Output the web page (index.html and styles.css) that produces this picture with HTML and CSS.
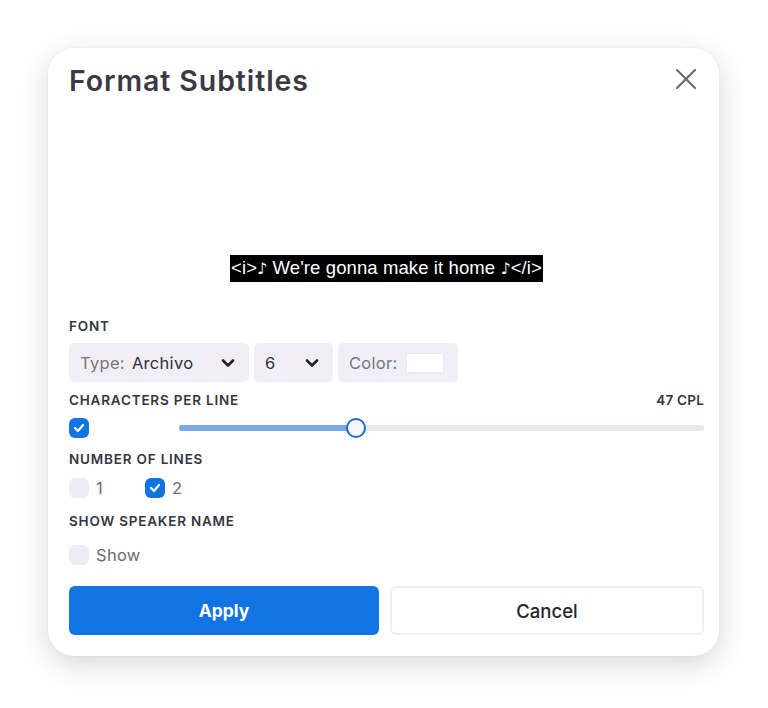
FILE: index.html
```html
<!DOCTYPE html>
<html>
<head>
<meta charset="utf-8">
<link rel="stylesheet" href="styles.css">
</head>
<body>
<div class="page">
  <div class="modal">
    <div class="header">
      <h1 class="title">Format Subtitles</h1>
      <button class="close" aria-label="Close">
        <svg width="22" height="22" viewBox="0 0 22 22"><path d="M2 2 L20 20 M20 2 L2 20" stroke="#6b6b73" stroke-width="2.2" stroke-linecap="round" fill="none"/></svg>
      </button>
    </div>
    <div class="preview">
      <span class="subtitle">&lt;i&gt;<span class="note">♪</span> We're gonna make it home <span class="note">♪</span>&lt;/i&gt;</span>
    </div>

    <div class="label l-font">FONT</div>
    <div class="selects">
      <div class="select s-type">
        <span class="muted">Type:</span><span class="val">Archivo</span>
        <svg class="chev" width="14" height="10" viewBox="0 0 14 10"><path d="M2 2.5 L7 7.5 L12 2.5" stroke="#1f1f26" stroke-width="2.6" fill="none" stroke-linecap="round" stroke-linejoin="round"/></svg>
      </div>
      <div class="select s-size">
        <span class="val">6</span>
        <svg class="chev" width="14" height="10" viewBox="0 0 14 10"><path d="M2 2.5 L7 7.5 L12 2.5" stroke="#1f1f26" stroke-width="2.6" fill="none" stroke-linecap="round" stroke-linejoin="round"/></svg>
      </div>
      <div class="select s-color">
        <span class="muted">Color:</span><span class="swatch"></span>
      </div>
    </div>

    <div class="label l-cpl"><span>CHARACTERS PER LINE</span><span class="cpl">47 CPL</span></div>
    <div class="slider-row">
      <span class="cb on"><svg width="12" height="10" viewBox="0 0 12 10"><path d="M2 5 L5 8 L10 2" stroke="#fff" stroke-width="2.2" fill="none" stroke-linecap="round" stroke-linejoin="round"/></svg></span>
      <div class="track">
        <div class="fill" style="width: 33.7%"></div>
        <div class="thumb" style="left: 33.7%"></div>
      </div>
    </div>

    <div class="label l-lines">NUMBER OF LINES</div>
    <div class="opts">
      <label class="opt"><span class="cb"></span><span class="opt-text">1</span></label>
      <label class="opt"><span class="cb on"><svg width="12" height="10" viewBox="0 0 12 10"><path d="M2 5 L5 8 L10 2" stroke="#fff" stroke-width="2.2" fill="none" stroke-linecap="round" stroke-linejoin="round"/></svg></span><span class="opt-text">2</span></label>
    </div>

    <div class="label l-speaker">SHOW SPEAKER NAME</div>
    <div class="opts o-show">
      <label class="opt"><span class="cb"></span><span class="opt-text">Show</span></label>
    </div>

    <div class="buttons">
      <button class="btn apply">Apply</button>
      <button class="btn cancel">Cancel</button>
    </div>
  </div>
</div>
</body>
</html>
```
FILE: styles.css
```css
* { box-sizing: border-box; }
html, body { margin: 0; padding: 0; background: #ffffff; }
body { font-family: Inter, "Noto Sans", sans-serif; color: #3a3a44; }
.page { padding: 48px 49px 0 48px; width: 768px; height: 708px; }
.modal {
  width: 671px;
  height: 608px;
  background: #fff;
  border-radius: 26px;
  box-shadow: 0 8px 28px rgba(0,0,0,0.16), 0 0 3px rgba(0,0,0,0.05);
  padding: 16px 15px 21px 21px;
  display: flex;
  flex-direction: column;
}
.header { height: 34px; display: flex; align-items: center; justify-content: space-between; }
.title { margin: 0; font-size: 28.5px; font-weight: 600; letter-spacing: 0.9px; color: #3a3a44; line-height: 34px; }
.close { border: 0; background: none; padding: 0; width: 22px; height: 22px; margin-right: 7px; margin-top: -4px; display: flex; }
.preview { height: 212px; display: flex; align-items: flex-end; justify-content: center; padding-bottom: 28px; }
.subtitle {
  background: #000; color: #fff;
  font-family: "Liberation Sans", Arial, sans-serif;
  font-size: 18.5px; line-height: 26px; padding: 0 1px;
  letter-spacing: 0.1px;
  white-space: nowrap;
}
.note { font-family: "DejaVu Sans", sans-serif; font-variant-emoji: text; font-weight: 700; color: #fff; font-size: 16px; }
.label { font-size: 13.5px; font-weight: 600; line-height: 16px; color: #36363f; letter-spacing: 0.8px; }
.cpl { letter-spacing: 0.2px; }
.l-font { margin-top: 8px; }
.selects { display: flex; gap: 5px; margin-top: 9px; height: 39px; }
.select { background: #f2eef8; border-radius: 5px; display: flex; align-items: center; padding: 0 11px; font-size: 16.5px; letter-spacing: 0.3px; }
.s-type { width: 180px; }
.s-size { width: 79px; }
.s-color { width: 120px; }
.muted { color: #76767f; }
.val { color: #2f2f38; margin-left: 7px; }
.s-size .val { margin-left: 0; }
.chev { margin-left: auto; margin-right: 3px; }
.swatch { width: 38px; height: 20px; background: #fff; margin-left: 8px; border: 1px solid #ece8f0; }
.l-cpl { margin-top: 10px; display: flex; justify-content: space-between; }
.slider-row { margin-top: 10px; height: 20px; display: flex; align-items: center; }
.cb { width: 20px; height: 20px; border-radius: 6px; background: #efeaf5; display: inline-flex; align-items: center; justify-content: center; flex: none; }
.cb.on { background: #1273e3; }
.track { position: relative; margin-left: 90px; flex: 1; height: 6px; border-radius: 3px; background: #ebe5ee; }
.fill { position: absolute; left: 0; top: 0; bottom: 0; background: #7aa8e8; border-radius: 3px; }
.thumb { position: absolute; top: 50%; width: 20px; height: 20px; margin: -10px 0 0 -10px; border-radius: 50%; background: #f7f6fb; border: 2px solid #1c6cd1; }
.l-lines { margin-top: 13px; }
.opts { margin-top: 11px; display: flex; height: 20px; align-items: center; gap: 42px; }
.opt { display: flex; align-items: center; gap: 7px; }
.opt-text { font-size: 16.5px; color: #6a6a73; letter-spacing: 0.3px; }
.l-speaker { margin-top: 15px; }
.o-show { margin-top: 16px; }
.buttons { margin-top: 21px; display: flex; gap: 11px; height: 49px; }
.btn { flex: 1; border-radius: 6px; font-family: Inter, "Noto Sans", sans-serif; font-size: 17.5px; }
.apply { background: #1273e3; color: #fff; border: 0; font-weight: 700; }
.cancel { background: #fff; color: #25252b; border: 2px solid #f0eef5; font-weight: 500; font-size: 18.5px; }
```
